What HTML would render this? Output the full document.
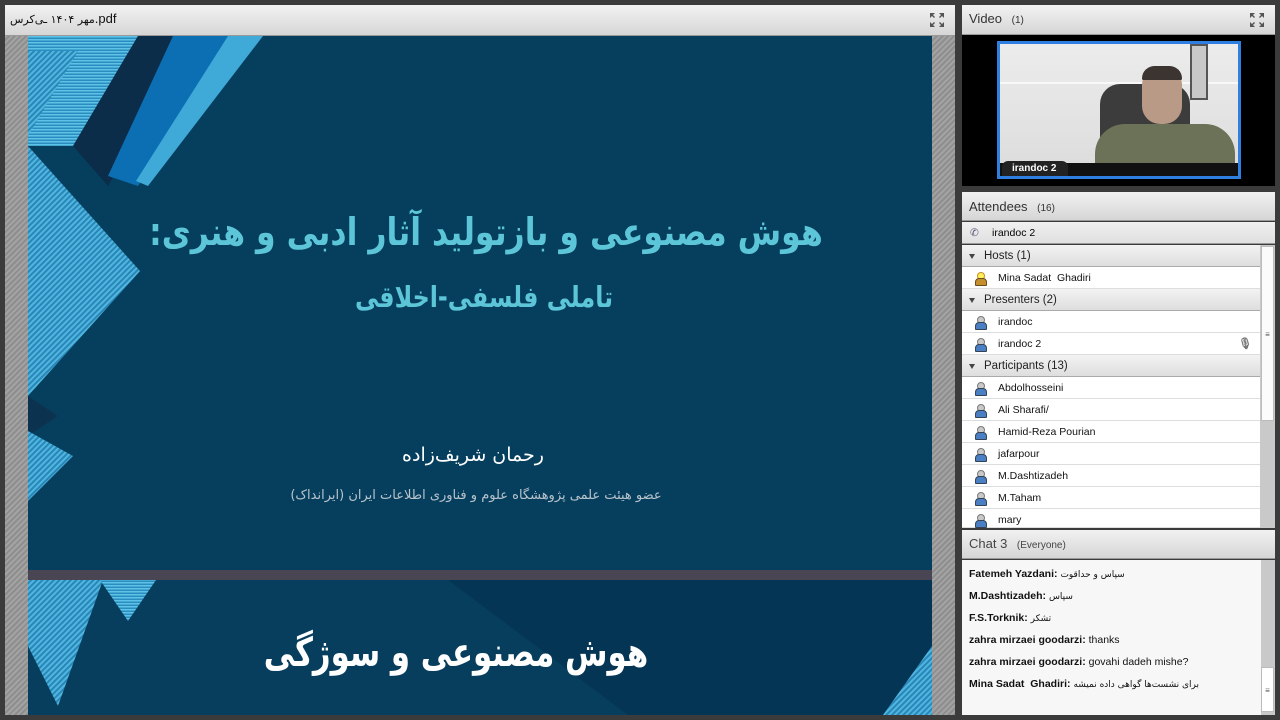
<!DOCTYPE html>
<html><head><meta charset="utf-8"><style>
*{margin:0;padding:0;box-sizing:border-box}
body{width:1280px;height:720px;background:#3b3b3b;position:relative;overflow:hidden;font-family:"Liberation Sans","Noto Sans CJK SC",sans-serif}
.abs{position:absolute}
.hdr{background:linear-gradient(#f2f2f2,#d6d6d6);border-bottom:1px solid #999}
.fa{font-family:"DejaVu Sans","Noto Sans CJK SC",sans-serif;direction:rtl}
.row{position:absolute;left:962px;width:298px;height:22px;background:#fff;border-bottom:1px solid #ddd;font-size:10.5px;color:#111;line-height:22px}
.row span{position:absolute;left:36px}
.grp{position:absolute;left:962px;width:298px;height:22px;background:linear-gradient(#f3f3f3,#dedede);border-bottom:1px solid #aaa;font-size:11.5px;color:#222;line-height:22px}
.grp span{position:absolute;left:22px}
.grp i{position:absolute;left:7px;top:9px;border-left:3px solid transparent;border-right:3px solid transparent;border-top:5px solid #444}
.ic{position:absolute;left:13px;top:5px;width:10px;height:12px}
.ic:before{content:"";position:absolute;left:2px;top:0;width:6px;height:6px;border-radius:50%;background:#c9c9c9;border:1px solid #777}
.ic:after{content:"";position:absolute;left:0;top:6px;width:10px;height:6px;border-radius:4px 4px 1px 1px;background:#4a7fc4;border:1px solid #345}
.chat{position:absolute;left:969px;font-size:10.5px;color:#111}
.chat b{font-weight:bold}
.ctr{position:absolute;left:0;width:0;white-space:nowrap}
.ctr div{position:absolute;left:0;white-space:nowrap}
</style></head><body>
<div class="abs hdr" style="left:5px;top:5px;width:950px;height:31px"></div>
<div class="abs" style="left:10px;top:11px;font-size:13px;color:#111"><span class="fa" style="font-size:11px">مهر ۱۴۰۴ ـی‌کرس</span>.pdf</div>
<svg class="abs" style="left:929px;top:12px" width="16" height="16" viewBox="0 0 16 16" fill="#555"><path d="M1 1h5L4 3l2 2-1 1-2-2-2 2zM15 1v5l-2-2-2 2-1-1 2-2-2-2zM1 15v-5l2 2 2-2 1 1-2 2 2 2zM15 15h-5l2-2-2-2 1-1 2 2 2-2z"/></svg>
<div class="abs" style="left:5px;top:36px;width:950px;height:679px;background:repeating-linear-gradient(135deg,#a3a3a3 0 2px,#8e8e8e 2px 4px)"></div>
<svg class="abs" style="left:28px;top:36px" width="904" height="679" viewBox="0 0 904 679">
<defs>
<pattern id="st" width="4" height="4" patternUnits="userSpaceOnUse" patternTransform="rotate(45)"><rect width="4" height="4" fill="#2a86b8"/><rect width="2" height="4" fill="#4fb7df"/></pattern>
<pattern id="hs" width="4" height="3" patternUnits="userSpaceOnUse"><rect width="4" height="3" fill="#2b8dbf"/><rect width="4" height="1.5" fill="#5cc2e6"/></pattern>
</defs>
<rect width="904" height="534" fill="#063f5e"/>
<polygon points="0,0 110,0 45,110 0,110" fill="url(#hs)"/>
<polygon points="0,15 50,15 0,100" fill="url(#st)"/>
<polygon points="110,0 165,0 80,150 45,110" fill="#0b2d4a"/>
<polygon points="145,0 205,0 110,150 80,140" fill="#0d6fb3"/>
<polygon points="200,0 235,0 120,150 108,145" fill="#3fa9d8"/>
<polygon points="0,110 112,235 0,360" fill="url(#st)"/>
<polygon points="0,360 30,380 0,400" fill="#0b3350"/>
<polygon points="0,395 45,420 0,465" fill="url(#st)"/>
<rect y="534" width="904" height="10" fill="#4a4552"/>
<rect y="544" width="904" height="135" fill="#073e5d"/>
<polygon points="420,544 904,544 904,679 600,679" fill="#053555"/>
<polygon points="0,544 75,544 30,670 0,610" fill="url(#st)"/>
<polygon points="72,544 128,544 100,585" fill="url(#hs)"/>
<polygon points="904,610 904,679 855,679" fill="url(#st)"/>
</svg>
<div class="ctr" style="left:486px;top:210px"><div class="fa" style="transform:translateX(-50%) scaleX(0.83);font-size:38px;font-weight:bold;color:#5cc6d8">هوش مصنوعی و بازتولید آثار ادبی و هنری:</div></div>
<div class="ctr" style="left:484px;top:280px"><div class="fa" style="transform:translateX(-50%) scaleX(0.82);font-size:29px;font-weight:bold;color:#5cc6d8">تاملی فلسفی-اخلاقی</div></div>
<div class="ctr" style="left:473px;top:444px"><div class="fa" style="transform:translateX(-50%);font-size:19px;color:#fff">رحمان شریف‌زاده</div></div>
<div class="ctr" style="left:476px;top:488px"><div class="fa" style="transform:translateX(-50%);font-size:13px;color:#b8c3cc">عضو هیئت علمی پژوهشگاه علوم و فناوری اطلاعات ایران (ایرانداک)</div></div>
<div class="ctr" style="left:456px;top:630px"><div class="fa" style="transform:translateX(-50%) scaleX(0.77);font-size:40px;font-weight:bold;color:#fff">هوش مصنوعی و سوژگی</div></div>

<div class="abs hdr" style="left:962px;top:5px;width:313px;height:30px"></div>
<div class="abs" style="left:969px;top:11px;font-size:13px;color:#333">Video <span style="font-size:10px;margin-left:6px">(1)</span></div>
<svg class="abs" style="left:1249px;top:12px" width="16" height="16" viewBox="0 0 16 16" fill="#555"><path d="M1 1h5L4 3l2 2-1 1-2-2-2 2zM15 1v5l-2-2-2 2-1-1 2-2-2-2zM1 15v-5l2 2 2-2 1 1-2 2 2 2zM15 15h-5l2-2-2-2 1-1 2 2 2-2z"/></svg>
<div class="abs" style="left:962px;top:35px;width:313px;height:151px;background:#000"></div>
<div class="abs" style="left:997px;top:41px;width:244px;height:138px;border:3px solid #2f7fe0;background:linear-gradient(#ececec,#dcdcdc);overflow:hidden">
 <div class="abs" style="left:0;top:38px;width:240px;height:2px;background:#f8f8f8"></div>
 <div class="abs" style="left:190px;top:0;width:18px;height:56px;background:#c8c8c8;border:2px solid #555"></div>
 <div class="abs" style="left:100px;top:40px;width:90px;height:100px;background:#3c3c3c;border-radius:20px 20px 0 0"></div>
 <div class="abs" style="left:95px;top:80px;width:140px;height:60px;background:#6c7257;border-radius:30px 30px 0 0"></div>
 <div class="abs" style="left:142px;top:25px;width:40px;height:55px;background:#b89a86;border-radius:16px 16px 18px 18px"></div>
 <div class="abs" style="left:142px;top:22px;width:40px;height:14px;background:#3c3430;border-radius:16px 16px 2px 2px"></div>
 <div class="abs" style="left:0;top:119px;width:240px;height:14px;background:#111"></div>
 <div class="abs" style="left:2px;top:117px;width:66px;height:16px;background:#222;border-radius:6px 6px 0 0;color:#fff;font-size:10px;font-weight:bold;line-height:16px;padding-left:10px">irandoc 2</div>
</div>

<div class="abs hdr" style="left:962px;top:192px;width:313px;height:29px"></div>
<div class="abs" style="left:969px;top:199px;font-size:13px;color:#333">Attendees <span style="font-size:10px;margin-left:6px">(16)</span></div>
<div class="abs" style="left:962px;top:222px;width:313px;height:22px;background:linear-gradient(#f0f0f0,#e0e0e0);border-bottom:1px solid #999;font-size:10.5px;line-height:22px"><span style="position:absolute;left:8px;color:#557">✆</span><span style="position:absolute;left:30px">irandoc 2</span></div>
<div class="abs" style="left:1260px;top:245px;width:15px;height:283px;background:#c9c9c9"></div>
<div class="abs" style="left:1261px;top:246px;width:13px;height:175px;background:#fbfbfb;border:1px solid #bbb;font-size:8px;text-align:center;line-height:175px;color:#555">≡</div>
<div class="grp" style="top:245px"><i></i><span>Hosts (1)</span></div>
<div class="row" style="top:267px"><div class="ic" style="filter:sepia(1) saturate(3)"></div><span>Mina Sadat&nbsp; Ghadiri</span></div>
<div class="grp" style="top:289px"><i></i><span>Presenters (2)</span></div>
<div class="row" style="top:311px"><div class="ic"></div><span>irandoc</span></div>
<div class="row" style="top:333px"><div class="ic"></div><span>irandoc 2</span><b style="position:absolute;left:276px;color:#777;font-size:11px">🎙</b></div>
<div class="grp" style="top:355px"><i></i><span>Participants (13)</span></div>
<div class="row" style="top:377px"><div class="ic"></div><span>Abdolhosseini</span></div>
<div class="row" style="top:399px"><div class="ic"></div><span>Ali Sharafi/</span></div>
<div class="row" style="top:421px"><div class="ic"></div><span>Hamid-Reza Pourian</span></div>
<div class="row" style="top:443px"><div class="ic"></div><span>jafarpour</span></div>
<div class="row" style="top:465px"><div class="ic"></div><span>M.Dashtizadeh</span></div>
<div class="row" style="top:487px"><div class="ic"></div><span>M.Taham</span></div>
<div class="row" style="top:509px;height:19px"><div class="ic"></div><span>mary</span></div>

<div class="abs hdr" style="left:962px;top:530px;width:313px;height:29px"></div>
<div class="abs" style="left:969px;top:536px;font-size:13px;color:#444">Chat 3 <span style="font-size:10px;margin-left:6px">(Everyone)</span></div>
<div class="abs" style="left:962px;top:560px;width:300px;height:155px;background:#f7f7f7"></div>
<div class="abs" style="left:1261px;top:560px;width:14px;height:155px;background:#c9c9c9"></div>
<div class="abs" style="left:1261px;top:667px;width:13px;height:45px;background:#fff;border:1px solid #bbb;font-size:8px;text-align:center;line-height:45px;color:#555">≡</div>
<div class="chat" style="top:568px"><b>Fatemeh Yazdani:</b> <span class="fa" style="font-size:9px">سپاس و حداقوت</span></div>
<div class="chat" style="top:590px"><b>M.Dashtizadeh:</b> <span class="fa" style="font-size:9px">سپاس</span></div>
<div class="chat" style="top:612px"><b>F.S.Torknik:</b> <span class="fa" style="font-size:9px">تشکر</span></div>
<div class="chat" style="top:634px"><b>zahra mirzaei goodarzi:</b> thanks</div>
<div class="chat" style="top:656px"><b>zahra mirzaei goodarzi:</b> govahi dadeh mishe?</div>
<div class="chat" style="top:678px"><b>Mina Sadat&nbsp; Ghadiri:</b> <span class="fa" style="font-size:9px">برای نشست‌ها گواهی داده نمیشه</span></div>
</body></html>
